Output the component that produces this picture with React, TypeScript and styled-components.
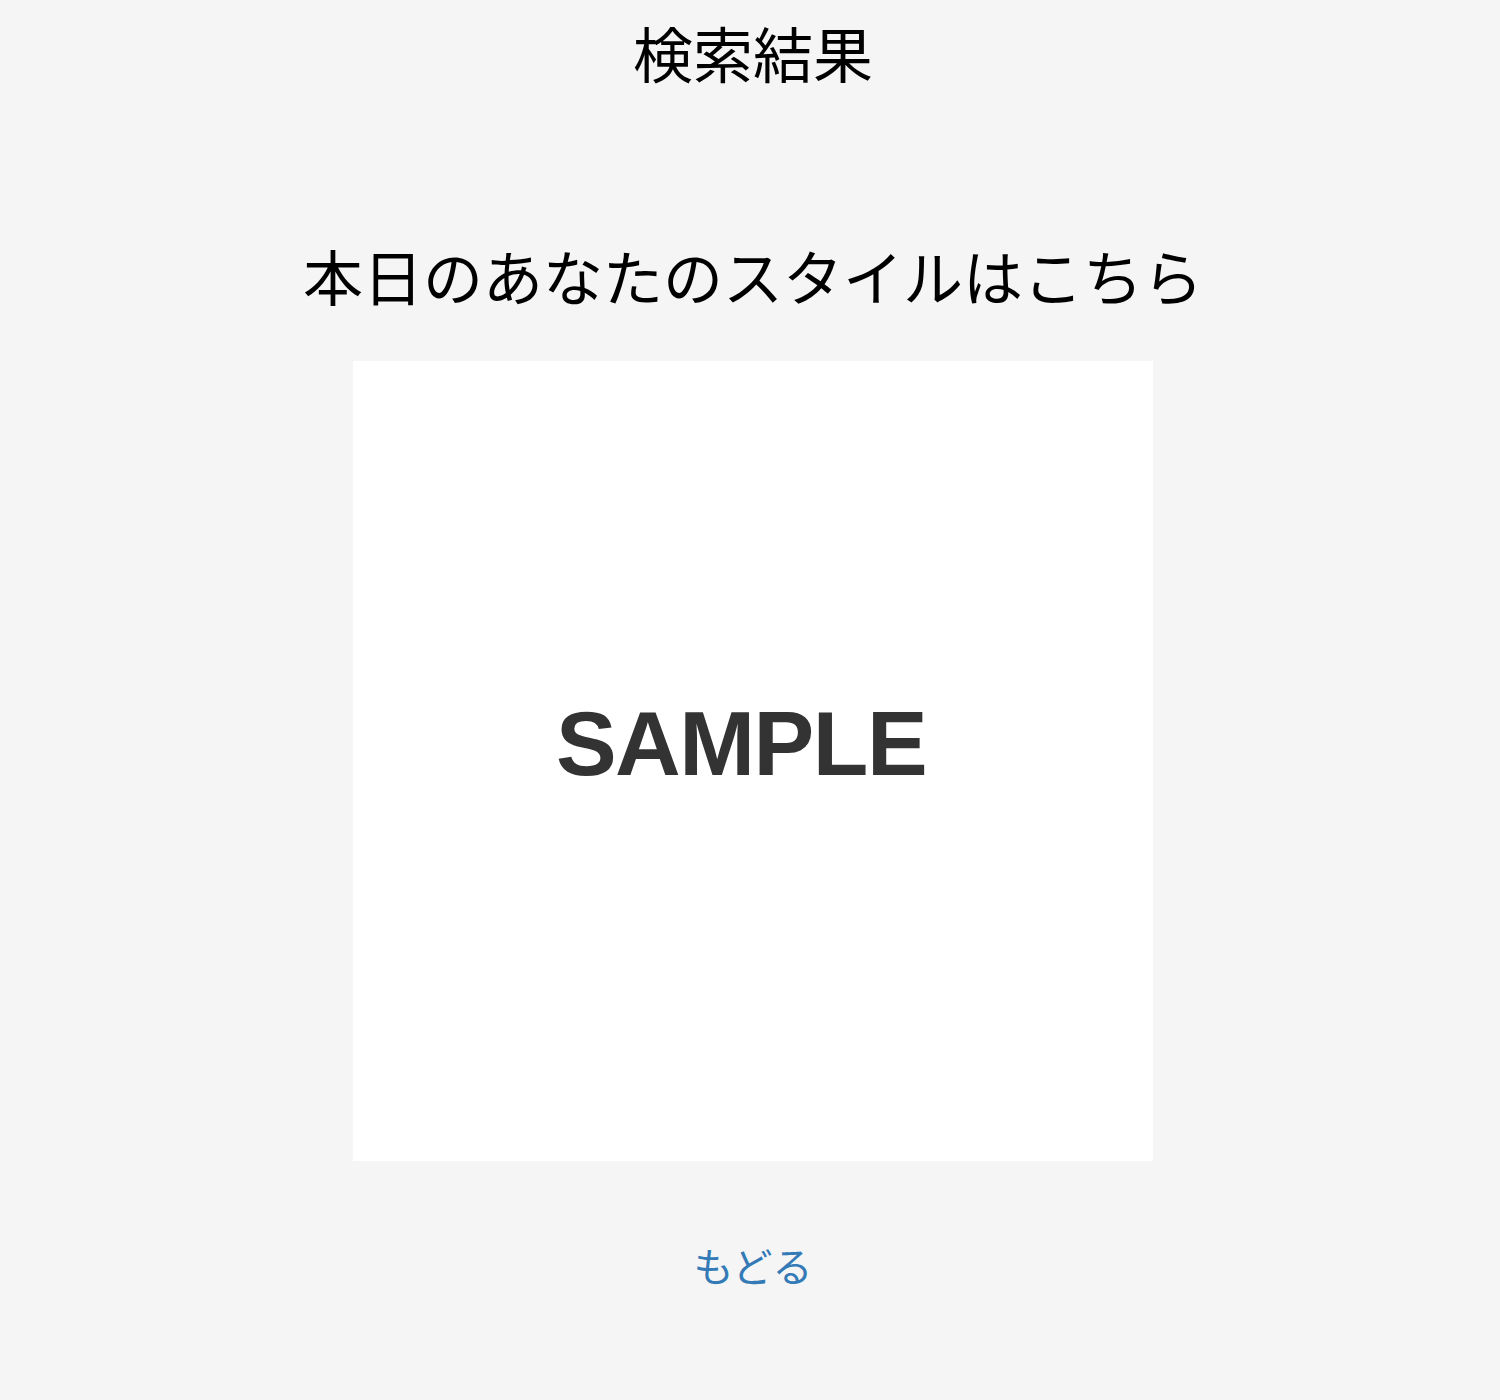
import React from "react";
import styled, { createGlobalStyle } from "styled-components";

const GlobalStyle = createGlobalStyle`
  html, body {
    margin: 0;
    padding: 0;
    background: #f5f5f5;
  }
  body {
    font-family: "Noto Sans CJK JP", "Noto Sans", sans-serif;
    color: #000;
  }
`;

const Page = styled.main`
  display: flex;
  flex-direction: column;
  align-items: center;
  min-height: 1400px;
  padding: 16px 0 0 6px;
  box-sizing: border-box;
`;

const Title = styled.h1`
  margin: 0;
  font-size: 60px;
  font-weight: 400;
  line-height: 72px;
`;

const Lead = styled.h2`
  margin: 151px 0 0;
  font-size: 60px;
  font-weight: 400;
  line-height: 72px;
`;

const ResultImage = styled.div`
  margin-top: 50px;
  width: 800px;
  height: 800px;
  background: #fff;
  display: flex;
  align-items: center;
  justify-content: center;
`;

const SampleText = styled.span`
  font-family: "Liberation Sans", Arial, sans-serif;
  font-weight: 700;
  font-size: 91px;
  letter-spacing: -1.5px;
  color: #333;
  margin: -34px 0 0 -24px;
`;

const BackLink = styled.a`
  margin-top: 80px;
  font-size: 40px;
  line-height: 48px;
  color: #337ab7;
  text-decoration: none;
  cursor: pointer;
`;

export default function App() {
  return (
    <>
      <GlobalStyle />
      <Page>
        <Title>検索結果</Title>
        <Lead>本日のあなたのスタイルはこちら</Lead>
        <ResultImage>
          <SampleText>SAMPLE</SampleText>
        </ResultImage>
        <BackLink href="#">もどる</BackLink>
      </Page>
    </>
  );
}
